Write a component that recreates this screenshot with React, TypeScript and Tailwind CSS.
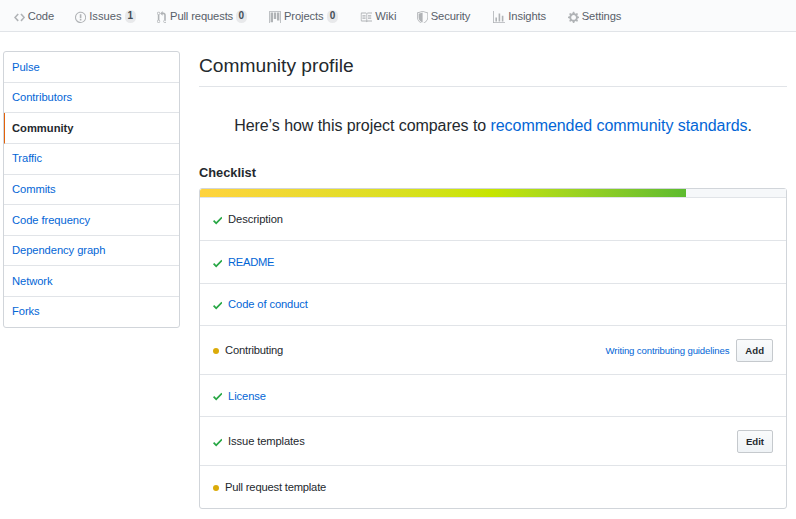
import type { ReactNode } from "react";

type IconProps = { d: string; w: number; className?: string };

function Octicon({ d, w, className = "" }: IconProps) {
  return (
    <svg
      viewBox={`0 0 ${w} 16`}
      width={w * 0.8}
      height={12.8}
      fill="currentColor"
      fillRule="evenodd"
      className={`shrink-0 ${className}`}
      aria-hidden="true"
    >
      <path d={d} />
    </svg>
  );
}

const icons = {
  code: "M9.5 3L8 4.5 11.5 8 8 11.5 9.5 13 14 8 9.5 3zm-5 0L0 8l4.5 5L6 11.5 2.5 8 6 4.5 4.5 3z",
  issue:
    "M7 2.3c3.14 0 5.7 2.56 5.7 5.7s-2.56 5.7-5.7 5.7A5.71 5.71 0 0 1 1.3 8c0-3.14 2.56-5.7 5.7-5.7zM7 1C3.14 1 0 4.14 0 8s3.14 7 7 7 7-3.14 7-7-3.14-7-7-7zm1 3H6v5h2V4zm0 6H6v2h2v-2z",
  pull: "M11 11.28V5c-.03-.78-.34-1.47-.94-2.06C9.46 2.35 8.78 2.03 8 2H7V0L4 3l3 3V4h1c.27.02.48.11.69.31.21.2.3.42.31.69v6.28A1.993 1.993 0 0 0 10 15a1.993 1.993 0 0 0 1-3.72zm-1 2.92c-.66 0-1.2-.55-1.2-1.2 0-.65.55-1.2 1.2-1.2.65 0 1.2.55 1.2 1.2 0 .65-.55 1.2-1.2 1.2zM4 3c0-1.11-.89-2-2-2a1.993 1.993 0 0 0-1 3.72v6.56A1.993 1.993 0 0 0 2 15a1.993 1.993 0 0 0 1-3.72V4.72c.59-.34 1-.98 1-1.72zm-.8 10c0 .66-.55 1.2-1.2 1.2-.65 0-1.2-.55-1.2-1.2 0-.65.55-1.2 1.2-1.2.65 0 1.2.55 1.2 1.2zM2 4.2C1.34 4.2.8 3.65.8 3c0-.65.55-1.2 1.2-1.2.65 0 1.2.55 1.2 1.2 0 .65-.55 1.2-1.2 1.2z",
  project:
    "M10 12h3V2h-3v10zm-4-2h3V2H6v8zm-4 4h3V2H2v12zm-1 1h13V1H1v14zM14 0H1a1 1 0 0 0-1 1v14a1 1 0 0 0 1 1h13a1 1 0 0 0 1-1V1a1 1 0 0 0-1-1z",
  book: "M3 5h4v1H3V5zm0 3h4V7H3v1zm0 2h4V9H3v1zm11-5h-4v1h4V5zm0 2h-4v1h4V7zm0 2h-4v1h4V9zm2-6v9c0 .55-.45 1-1 1H9.5l-1 1-1-1H2c-.55 0-1-.45-1-1V3c0-.55.45-1 1-1h5.5l1 1 1-1H15c.55 0 1 .45 1 1zm-8 .5L7.5 3H2v9h6V3.5zm7-.5H9.5l-.5.5V12h6V3z",
  shield:
    "M0 2l7-2 7 2v6.02C14 12.69 8.69 16 7 16c-1.69 0-7-3.31-7-7.98V2zm1 .75L7 1l6 1.75v5.268C13 12.104 8.449 15 7 15c-1.449 0-6-2.896-6-6.982V2.75zm1 .75L7 2v12c-1.207 0-5-2.482-5-5.985V3.5z",
  graph: "M16 14v1H0V0h1v14h15zM5 13H3V8h2v5zm4 0H7V3h2v10zm4 0h-2V6h2v7z",
  gear: "M14 8.77v-1.6l-1.94-.64-.45-1.09.88-1.84-1.13-1.13-1.81.91-1.09-.45-.69-1.92h-1.6l-.63 1.94-1.11.45-1.84-.88-1.13 1.13.91 1.81-.45 1.09L0 7.23v1.59l1.94.64.45 1.09-.88 1.84 1.13 1.13 1.81-.91 1.09.45.69 1.92h1.59l.63-1.94 1.11-.45 1.84.88 1.13-1.13-.92-1.81.47-1.09L14 8.75v.02zM7 11c-1.66 0-3-1.34-3-3s1.34-3 3-3 3 1.34 3 3-1.34 3-3 3z",
  check: "M12 5l-8 8-4-4 1.5-1.5L4 10l6.5-6.5L12 5z",
};

const tabs = [
  { label: "Code", icon: icons.code, w: 14, slot: "w-[61px]", text: "ml-[3px] tracking-[-0.1px]" },
  { label: "Issues", icon: icons.issue, w: 14, count: 1, slot: "w-[82px]", text: "ml-[3.5px] mr-[3px]" },
  { label: "Pull requests", icon: icons.pull, w: 12, count: 0, slot: "w-[112px]", text: "ml-[4px] mr-[2.5px] tracking-[-0.13px]" },
  { label: "Projects", icon: icons.project, w: 15, count: 0, slot: "w-[91px]", text: "ml-[3.5px] mr-[3px] tracking-[-0.1px]" },
  { label: "Wiki", icon: icons.book, w: 16, slot: "w-[57px]", text: "ml-[3px]" },
  { label: "Security", icon: icons.shield, w: 14, slot: "w-[76px]", text: "ml-[3px] tracking-[-0.1px]" },
  { label: "Insights", icon: icons.graph, w: 16, slot: "w-[75px]", text: "ml-[3px] tracking-[-0.1px]" },
  { label: "Settings", icon: icons.gear, w: 14, slot: "w-[70px]", text: "ml-[3px] tracking-[-0.1px]" },
];

const menu = [
  { label: "Pulse", h: "h-[31px]" },
  { label: "Contributors", h: "h-[30px]" },
  { label: "Community", h: "h-[31px]" },
  { label: "Traffic", h: "h-[31px] pb-[2px]" },
  { label: "Commits", h: "h-[30px]" },
  { label: "Code frequency", h: "h-[31px]" },
  { label: "Dependency graph", h: "h-[30px]" },
  { label: "Network", h: "h-[31px]" },
  { label: "Forks", h: "h-[30px] pb-[2px]" },
];

function Button({ children }: { children: ReactNode }) {
  return (
    <button className="h-[23px] rounded-[2px] border border-[#c5c9cd] bg-linear-to-b from-[#fafbfc] to-[#eff3f6] px-2 pt-[2px] text-[9.6px] leading-none font-bold text-[#24292e]">
      {children}
    </button>
  );
}

type RowProps = { label: string; h: string; text?: string; done?: boolean; link?: boolean; children?: ReactNode };

function Row({ label, h, text = "", done, link, children }: RowProps) {
  return (
    <li className={`flex items-center border-b border-[#e1e4e8] pr-[13px] pl-3 last:border-b-0 ${h}`}>
      {done ? (
        <Octicon d={icons.check} w={12} className="mt-[2px] mr-[6px] ml-[0.5px] text-[#28a745]" />
      ) : (
        <span className="mt-[2px] mr-[6px] ml-[0.5px] size-[6.5px] rounded-full bg-[#dbab09]" />
      )}
      <span className={`${link ? "text-[#0366d6]" : ""} ${text}`}>{label}</span>
      <div className="ml-auto flex items-center gap-[7px]">{children}</div>
    </li>
  );
}

export default function App() {
  return (
    <div className="h-[519px] w-[796px] overflow-hidden bg-white font-['Liberation_Sans',Arial,sans-serif] text-[11.2px] leading-[17px] text-[#24292e]">
      <nav className="flex h-8 items-center border-b border-[#e1e4e8] bg-[#fafbfc] pl-[13.5px] text-[#586069]">
        {tabs.map((t) => (
          <a key={t.label} className={`flex shrink-0 items-center whitespace-nowrap ${t.slot}`}>
            <Octicon d={t.icon} w={t.w} className="mt-[3px] text-[#b0b3b6]" />
            <span className={`pt-[2px] ${t.text}`}>{t.label}</span>
            {t.count !== undefined && (
              <span className="mt-[1px] flex h-[13px] min-w-[11.5px] items-center justify-center rounded-full bg-[#e8e9eb] px-[3px] text-[10px] leading-none font-bold text-[#444d56]">
                {t.count}
              </span>
            )}
          </a>
        ))}
      </nav>

      <div className="flex pt-[19px] pl-[3px]">
        <aside className="h-[277px] w-[177px] shrink-0 rounded-[3px] border border-[#d1d5da]">
          {menu.map((m) => (
            <a
              key={m.label}
              className={`flex items-center border-b border-[#e1e4e8] last:border-b-0 ${m.h} ${
                m.label === "Community"
                  ? "border-l border-l-[#e36209] pl-[7px] font-bold"
                  : "pl-2 tracking-[-0.07px] text-[#0366d6]"
              }`}
            >
              {m.label}
            </a>
          ))}
        </aside>

        <main className="ml-[19px] w-[588px]">
          <h1 className="h-9 border-b border-[#e1e4e8] text-[19.2px] leading-[29px]">Community profile</h1>
          <p className="h-[66px] pt-[27px] text-center text-[16px] leading-6 tracking-[-0.06px]">
            Here’s how this project compares to{" "}
            <a className="text-[#0366d6]">recommended community standards</a>.
          </p>
          <h2 className="mt-[11px] h-6 text-[12.8px] leading-[17px] font-bold">Checklist</h2>

          <section className="h-[321px] rounded-[3px] border border-[#d1d5da]">
            <div className="h-[9px] border-b border-[#e1e4e8] bg-[#f6f8fa]">
              <div className="h-2 w-[486px] rounded-tl-[2px] bg-linear-to-r from-[#ffd33d] via-[#c6e500] via-60% to-[#5dbb2f]" />
            </div>
            <ul>
              <Row label="Description" h="h-[43px]" text="tracking-[-0.1px]" done />
              <Row label="README" h="h-[43px]" text="tracking-[-0.3px]" done link />
              <Row label="Code of conduct" h="h-[42px]" text="tracking-[-0.12px]" done link />
              <Row label="Contributing" h="h-[49px]" text="tracking-[-0.18px]">
                <a className="text-[9.6px] tracking-[-0.13px] text-[#0366d6]">Writing contributing guidelines</a>
                <Button>Add</Button>
              </Row>
              <Row label="License" h="h-[42px]" text="pt-[2px] tracking-[-0.1px]" done link />
              <Row label="Issue templates" h="h-[49px]" text="tracking-[-0.12px]" done>
                <Button>Edit</Button>
              </Row>
              <Row label="Pull request template" h="h-[42px]" text="tracking-[-0.19px]" />
            </ul>
          </section>
        </main>
      </div>
    </div>
  );
}
